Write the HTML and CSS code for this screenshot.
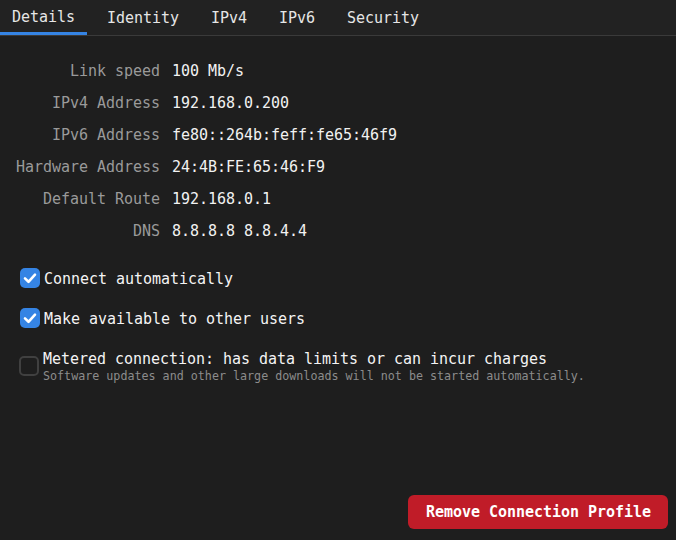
FILE: index.html
```html
<!DOCTYPE html>
<html>
<head>
<meta charset="utf-8">
<link rel="stylesheet" href="styles.css">
</head>
<body>
<div class="page">
  <nav class="tabs">
    <div class="tab active">Details</div>
    <div class="tab">Identity</div>
    <div class="tab">IPv4</div>
    <div class="tab">IPv6</div>
    <div class="tab">Security</div>
  </nav>
  <main class="content">
    <div class="details">
      <div class="label">Link speed</div><div class="value">100 Mb/s</div>
      <div class="label">IPv4 Address</div><div class="value">192.168.0.200</div>
      <div class="label">IPv6 Address</div><div class="value">fe80::264b:feff:fe65:46f9</div>
      <div class="label">Hardware Address</div><div class="value">24:4B:FE:65:46:F9</div>
      <div class="label">Default Route</div><div class="value">192.168.0.1</div>
      <div class="label">DNS</div><div class="value">8.8.8.8 8.8.4.4</div>
    </div>
    <div class="options">
      <div class="option">
        <span class="check checked"><svg viewBox="0 0 20 20" width="20" height="20"><path d="M5 10.4 L8.5 13.8 L15 6.6" fill="none" stroke="#fff" stroke-width="2.6" stroke-linecap="round" stroke-linejoin="round"/></svg></span>
        <span class="opt-text">Connect automatically</span>
      </div>
      <div class="option">
        <span class="check checked"><svg viewBox="0 0 20 20" width="20" height="20"><path d="M5 10.4 L8.5 13.8 L15 6.6" fill="none" stroke="#fff" stroke-width="2.6" stroke-linecap="round" stroke-linejoin="round"/></svg></span>
        <span class="opt-text">Make available to other users</span>
      </div>
      <div class="option metered">
        <span class="check unchecked"></span>
        <div class="opt-stack">
          <span class="opt-text">Metered connection: has data limits or can incur charges</span>
          <span class="opt-sub">Software updates and other large downloads will not be started automatically.</span>
        </div>
      </div>
    </div>
  </main>
  <footer class="footer">
    <button class="danger">Remove Connection Profile</button>
  </footer>
</div>
</body>
</html>
```

FILE: styles.css
```css
html, body {
  margin: 0;
  padding: 0;
  background: #1e1e1e;
}
body {
  font-family: "DejaVu Sans Mono", "Liberation Mono", monospace;
  font-size: 15px;
  letter-spacing: -0.03px;
  color: #ffffff;
}
.page {
  height: 540px;
  display: flex;
  flex-direction: column;
}
.tabs {
  display: flex;
  gap: 8px;
  height: 35px;
  background: #222222;
  border-bottom: 1px solid #3a3a3a;
}
.tab {
  padding: 1px 12px 0 12px;
  line-height: 34px;
  height: 35px;
  box-sizing: border-box;
  color: #e6e6e6;
}
.tab.active {
  border-bottom: 3px solid #3584e4;
  line-height: 33px;
}
.content {
  padding: 19px 16px 0 16px;
}
.details {
  display: grid;
  grid-template-columns: max-content max-content;
  column-gap: 12px;
  grid-auto-rows: 32px;
  align-items: center;
}
.label {
  text-align: right;
  color: #9a9a9a;
}
.value {
  color: #f2f2f2;
}
.options {
  margin-top: 21px;
  padding-left: 4px;
  display: flex;
  flex-direction: column;
  gap: 20px;
}
.option {
  display: flex;
  align-items: center;
  gap: 4px;
}
.option:not(.metered) {
  height: 20px;
}
.option > .opt-text {
  padding-top: 1px;
}
.check {
  width: 20px;
  height: 20px;
  border-radius: 5px;
  box-sizing: border-box;
  flex: none;
  display: flex;
}
.check.checked {
  background: #3584e4;
}
.check.unchecked {
  border: 2px solid #404040;
  margin-left: -1px;
  margin-right: 1px;
}
.opt-text {
  color: #f4f4f4;
  line-height: 20px;
}
.metered .opt-text {
  margin-left: -1px;
}
.opt-stack {
  display: flex;
  flex-direction: column;
  padding-top: 2px;
}
.opt-stack .opt-text {
  line-height: 18px;
}
.opt-sub {
  font-size: 11.7px;
  letter-spacing: 0;
  line-height: 16px;
  color: #8c8c8c;
  margin-left: -1px;
}
.footer {
  margin-top: auto;
  display: flex;
  justify-content: flex-end;
  padding: 0 8px 11px 0;
}
.danger {
  font-family: "DejaVu Sans Mono", "Liberation Mono", monospace;
  font-size: 15px;
  font-weight: bold;
  letter-spacing: -0.03px;
  color: #ffffff;
  background: #c01c28;
  border: none;
  border-radius: 6px;
  height: 34px;
  padding: 0 17px 0 18px;
}
```
